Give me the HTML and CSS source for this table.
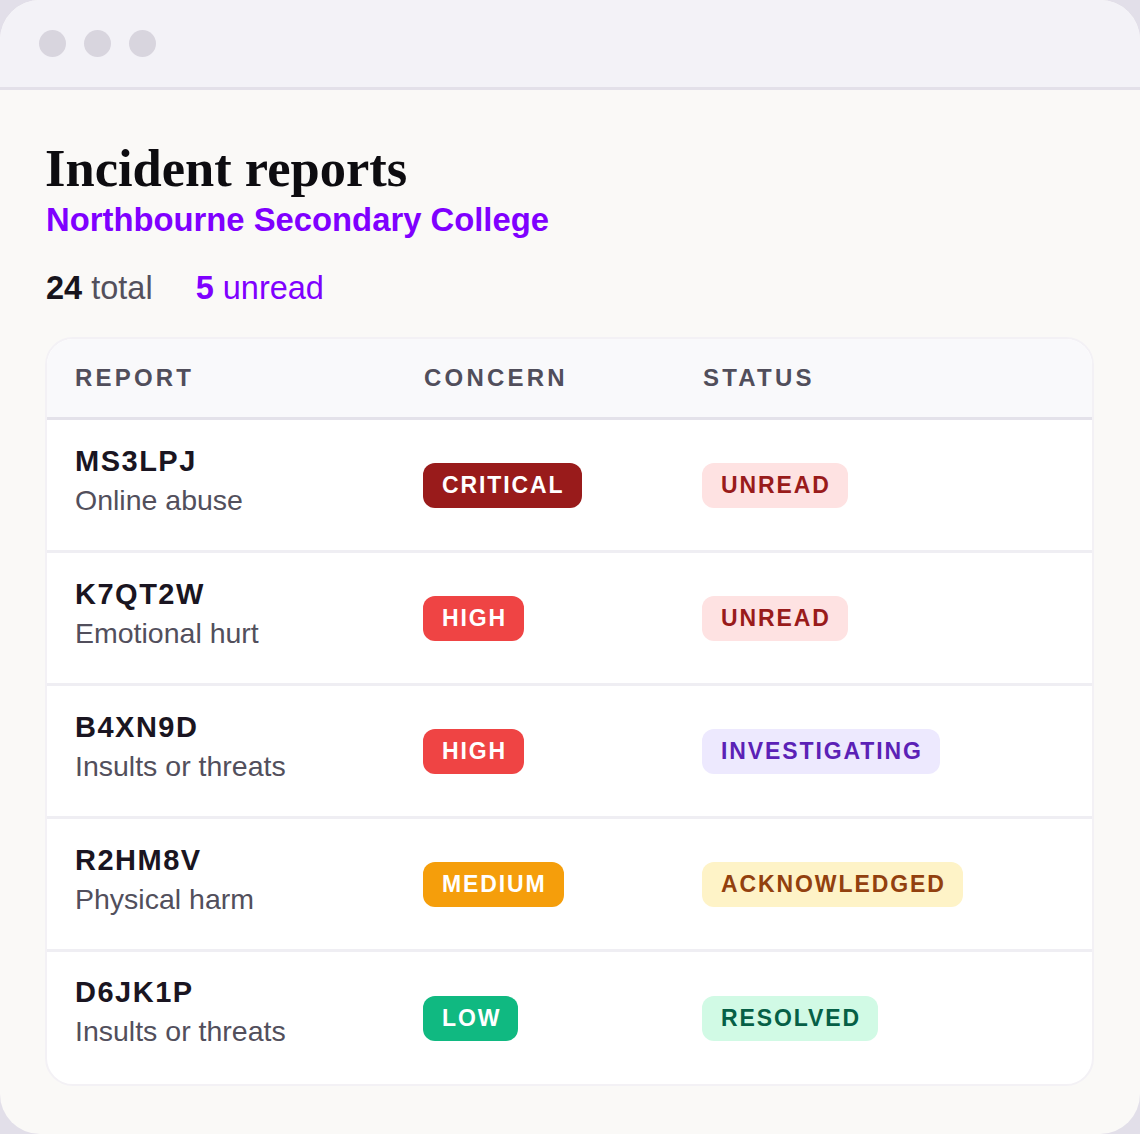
FILE: index.html
```html
<!DOCTYPE html>
<html lang="en">
<head>
<meta charset="utf-8">
<title>Incident reports</title>
<link rel="stylesheet" href="styles.css">
</head>
<body>
<div class="window">
  <div class="titlebar">
    <span class="dot"></span><span class="dot"></span><span class="dot"></span>
  </div>
  <main class="content">
    <h1 class="title">Incident reports</h1>
    <div class="org">Northbourne Secondary College</div>
    <div class="stats">
      <span class="stat"><b>24</b> total</span>
      <span class="stat stat-unread"><b>5</b> unread</span>
    </div>
    <div class="card">
      <div class="row head">
        <div class="cell">REPORT</div>
        <div class="cell">CONCERN</div>
        <div class="cell">STATUS</div>
      </div>
      <div class="row">
        <div class="cell report"><div class="rid">MS3LPJ</div><div class="desc">Online abuse</div></div>
        <div class="cell"><span class="badge critical">CRITICAL</span></div>
        <div class="cell"><span class="badge unread">UNREAD</span></div>
      </div>
      <div class="row">
        <div class="cell report"><div class="rid">K7QT2W</div><div class="desc">Emotional hurt</div></div>
        <div class="cell"><span class="badge high">HIGH</span></div>
        <div class="cell"><span class="badge unread">UNREAD</span></div>
      </div>
      <div class="row">
        <div class="cell report"><div class="rid">B4XN9D</div><div class="desc">Insults or threats</div></div>
        <div class="cell"><span class="badge high">HIGH</span></div>
        <div class="cell"><span class="badge investigating">INVESTIGATING</span></div>
      </div>
      <div class="row">
        <div class="cell report"><div class="rid">R2HM8V</div><div class="desc">Physical harm</div></div>
        <div class="cell"><span class="badge medium">MEDIUM</span></div>
        <div class="cell"><span class="badge acknowledged">ACKNOWLEDGED</span></div>
      </div>
      <div class="row last">
        <div class="cell report"><div class="rid">D6JK1P</div><div class="desc">Insults or threats</div></div>
        <div class="cell"><span class="badge low">LOW</span></div>
        <div class="cell"><span class="badge resolved">RESOLVED</span></div>
      </div>
    </div>
  </main>
</div>
</body>
</html>
```
FILE: styles.css
```css
html, body {
  margin: 0;
  padding: 0;
}
body {
  background: #e2dfe9;
  font-family: "Liberation Sans", Arial, sans-serif;
}
.window {
  width: 1140px;
  height: 1134px;
  border-radius: 40px;
  background: #faf9f7;
  overflow: hidden;
}
.titlebar {
  height: 87px;
  background: #f3f2f7;
  border-bottom: 3px solid #e3e0e9;
  display: flex;
  align-items: center;
  gap: 18px;
  padding-left: 39px;
}
.dot {
  width: 27px;
  height: 27px;
  border-radius: 50%;
  background: #d8d5de;
}
.content {
  padding: 48px 46px 0;
}
.title {
  margin: 0 0 0 -1px;
  font-family: "Liberation Serif", "Times New Roman", serif;
  font-weight: bold;
  font-size: 52.5px;
  line-height: 60px;
  color: #0d0c10;
}
.org {
  margin-top: 4px;
  font-weight: bold;
  font-size: 32.8px;
  line-height: 36px;
  color: #7f00ff;
}
.stats {
  margin-top: 32px;
  display: flex;
  gap: 43px;
  font-size: 32.5px;
  line-height: 36px;
}
.stat {
  color: #53505c;
}
.stat b {
  color: #17141d;
}
.stat-unread, .stat-unread b {
  color: #7f00ff;
}
.card {
  margin-top: 31px;
  margin-left: -1px;
  background: #fff;
  border: 2px solid #f3f1f5;
  border-radius: 28px;
  overflow: hidden;
}
.row {
  display: grid;
  grid-template-columns: 350px 279px 1fr;
  align-items: center;
  height: 130px;
  border-top: 3px solid #efeef3;
}
.row.last {
  height: 132px;
}
.row.head {
  height: 78px;
  border-top: 0;
  border-bottom: 3px solid #e4e2ea;
  background: #f9f9fb;
  color: #514e5b;
  font-weight: bold;
  font-size: 24px;
  letter-spacing: 3.2px;
}
.row.head .cell {
  padding-left: 27px;
}
.row.head .cell:first-child {
  padding-left: 28px;
}
.row.head + .row {
  border-top: 0;
}
.cell {
  padding-left: 26px;
}
.report {
  display: flex;
  flex-direction: column;
  margin-top: -10px;
  padding-left: 28px;
}
.row.last .report {
  margin-top: -13px;
}
.rid {
  font-weight: bold;
  font-size: 29px;
  line-height: 34px;
  color: #1a1521;
  letter-spacing: 1.5px;
}
.desc {
  margin-top: 5px;
  font-size: 28.5px;
  line-height: 34px;
  color: #524f5c;
}
.badge {
  display: inline-flex;
  align-items: center;
  height: 45px;
  padding: 0 17px 0 19px;
  border-radius: 12px;
  font-weight: bold;
  font-size: 23px;
  letter-spacing: 1.9px;
  color: #fff;
}
.critical { background: #991b1b; }
.high { background: #ef4444; }
.medium { background: #f59e0b; }
.low { background: #10b981; }
.unread { background: #fee2e2; color: #991b1b; }
.investigating { background: #ede9fe; color: #5b21b6; }
.acknowledged { background: #fef3c7; color: #92400e; }
.resolved { background: #d1fae5; color: #065f46; }
```
